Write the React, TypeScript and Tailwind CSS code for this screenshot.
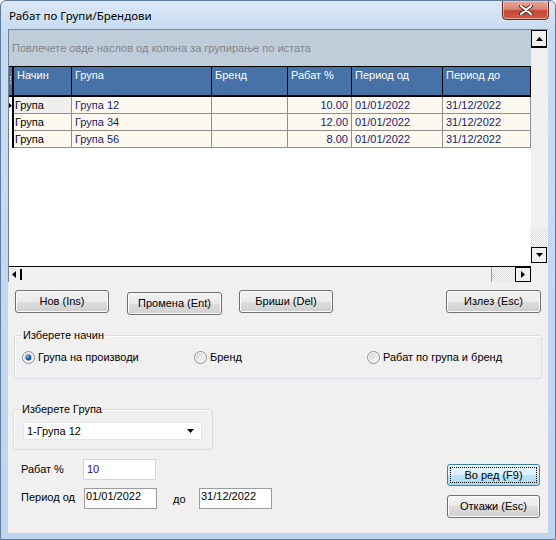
import React from "react";

const FONT = "font-['Liberation_Sans',Arial,sans-serif]";

function Radio({ checked }: { checked?: boolean }) {
  return (
    <svg width="13" height="13" viewBox="0 0 13 13" className="shrink-0">
      <defs>
        <linearGradient id="rbIn" x1="0" y1="0" x2="1" y2="1">
          <stop offset="0" stopColor="#d2d2d2" />
          <stop offset="1" stopColor="#fbfbfb" />
        </linearGradient>
        <radialGradient id="rbDot" cx="0.4" cy="0.35" r="0.7">
          <stop offset="0" stopColor="#8fc8ee" />
          <stop offset="0.45" stopColor="#2a6fb5" />
          <stop offset="1" stopColor="#0f3a72" />
        </radialGradient>
      </defs>
      <circle cx="6.5" cy="6.5" r="6" fill="#f6f6f6" stroke="#8e8f8f" strokeWidth="1" />
      <circle cx="6.5" cy="6.5" r="4.6" fill="url(#rbIn)" />
      {checked && <circle cx="6.5" cy="6.5" r="2.9" fill="url(#rbDot)" />}
    </svg>
  );
}

function Btn({ children, className = "" }: { children: React.ReactNode; className?: string }) {
  return (
    <div
      className={`h-[23px] flex items-center justify-center rounded-[3px] border border-[#707070] bg-[linear-gradient(#f2f2f2_0%,#ebebeb_50%,#dddddd_50%,#cfcfcf_100%)] shadow-[inset_0_0_0_1px_#fbfbfb] text-[11px] text-black ${className}`}
    >
      {children}
    </div>
  );
}

function Tri({ dir }: { dir: "up" | "down" | "left" | "right" }) {
  const pts =
    dir === "up"
      ? "0,4 7,4 3.5,0"
      : dir === "down"
      ? "0,0 7,0 3.5,4"
      : dir === "left"
      ? "4,0 4,7 0,3.5"
      : "0,0 0,7 4,3.5";
  const w = dir === "up" || dir === "down" ? 7 : 4;
  const h = dir === "up" || dir === "down" ? 4 : 7;
  return (
    <svg width={w} height={h} viewBox={`0 0 ${w} ${h}`}>
      <polygon points={pts} fill="#000" />
    </svg>
  );
}

const cols = [
  { w: "w-[58px]", t: "Начин" },
  { w: "w-[140px]", t: "Група" },
  { w: "w-[76px]", t: "Бренд" },
  { w: "w-[64px]", t: "Рабат %" },
  { w: "w-[91px]", t: "Период од" },
  { w: "w-[88px]", t: "Период до" },
];

const rows = [
  ["Група", "Група 12", "", "10.00", "01/01/2022", "31/12/2022"],
  ["Група", "Група 34", "", "12.00", "01/01/2022", "31/12/2022"],
  ["Група", "Група 56", "", "8.00", "01/01/2022", "31/12/2022"],
];

function Grid() {
  return (
    <div className="flex h-[253px] w-[540px]">
      <div className="flex flex-col w-[523px] h-full border-l border-[#6f8094] bg-white">
        <div className="h-[37px] bg-[#bfccd9] border-t border-[#7a8a9b] flex items-center pl-[3px] text-[11px] text-[#82878d]">
          Повлечете овде наслов од колона за групирање по истата
        </div>
        <div className="h-[31px] flex border-t border-b-2 border-black bg-[#4672a8] text-white text-[11px]">
          <div className="w-[5px] h-full border-r-2 border-black flex flex-col items-center pt-[9px]">
            <div className="w-[1px] h-[8px] border-l border-dotted border-[#d8e2ee]"></div>
          </div>
          {cols.map((c, i) => (
            <div key={i} className={`${c.w} h-full border-r border-black pl-[3px] pt-[2px] leading-[13px]`}>
              {c.t}
            </div>
          ))}
        </div>
        {rows.map((r, ri) => (
          <div key={ri} className="h-[17px] flex text-[11px] bg-[#fdf9ef]">
            <div className="w-[5px] h-full border-r-2 border-black bg-white flex items-center">
              {ri === 0 && <Tri dir="right" />}
            </div>
            {r.map((v, ci) => (
              <div
                key={ci}
                className={`${cols[ci].w} h-full border-r border-b border-[#8e8e8e] flex items-center leading-[13px] ${
                  ci === 0 ? "pl-[1px] text-black" : "pl-[3px] text-[#1b1b72]"
                } ${ci === 3 ? "justify-end pr-[3px]" : ""} ${ri === 0 && ci === 0 ? "bg-[#efefef]" : ""}`}
              >
                {v}
              </div>
            ))}
          </div>
        ))}
        <div className="flex-1 bg-white"></div>
        <div className="h-[16px] flex border-t border-black bg-[#f0f0f0]">
          <div className="w-[10px] flex items-center justify-center">
            <Tri dir="left" />
          </div>
          <div className="w-[473px] flex items-center border-r border-[#9a9a9a]">
            <div className="w-[2px] h-[11px] bg-black ml-[1px]"></div>
          </div>
          <div className="w-[23px] bg-[repeating-conic-gradient(#d8d8d8_0%_25%,#ffffff_0%_50%)] bg-size-[2px_2px]"></div>
          <div className="w-[16px] border border-black flex items-center justify-center">
            <Tri dir="right" />
          </div>
        </div>
      </div>
      <div className="w-[17px] h-full flex flex-col bg-[#f0f0f0]">
        <div className="h-[237px] flex flex-col border-t border-[#7a8a9b]">
          <div className="h-[18px] w-[16px] border border-b-2 border-black flex items-center justify-center">
            <Tri dir="up" />
          </div>
          <div className="flex-1"></div>
          <div className="h-[18px] w-[16px] bg-[repeating-conic-gradient(#d8d8d8_0%_25%,#ffffff_0%_50%)] bg-size-[2px_2px]"></div>
          <div className="h-[16px] w-[16px] border border-black flex items-center justify-center">
            <Tri dir="down" />
          </div>
          <div className="h-[3px]"></div>
        </div>
        <div className="flex-1"></div>
      </div>
    </div>
  );
}

export default function App() {
  return (
    <div className={`${FONT} w-[556px] h-[540px] flex flex-col rounded-t-[6px] border border-[#5f7c9e] bg-[linear-gradient(180deg,#dbe8f6_0px,#c8dcf1_28px,#bfd5ed_100%)] overflow-hidden`}>
      <div className="h-[28px] flex items-start justify-between">
        <div className="pl-[8px] pt-[7px] text-[11.5px] leading-[16px] text-black font-['Noto_Sans',sans-serif]">
          Рабат по Групи/Брендови
        </div>
        <div className="mt-[-1px] mr-[6px] w-[47px] h-[20px] rounded-b-[4px] border border-[#6b2a22] bg-[linear-gradient(#e6a99c_0%,#d98576_45%,#c4452f_55%,#cf5f48_100%)] shadow-[inset_0_0_0_1px_rgba(255,220,210,0.55)] flex items-center justify-center">
          <svg width="14" height="10" viewBox="0 0 14 10">
            <path d="M2 1 L12 9 M12 1 L2 9" stroke="#4a2a2a" strokeWidth="4" strokeLinecap="round" />
            <path d="M2 1 L12 9 M12 1 L2 9" stroke="#ffffff" strokeWidth="2.2" strokeLinecap="round" />
          </svg>
        </div>
      </div>
      <div className="mx-[7px] w-[540px] h-[504px] bg-[#f0f0f0] flex flex-col text-[11px] text-black">
        <Grid />
        <div className="mt-[8px] h-[25px] flex items-start">
          <Btn className="ml-[7px] w-[94px]">Нов (Ins)</Btn>
          <Btn className="ml-[18px] mt-[2px] w-[95px]">Промена (Ent)</Btn>
          <Btn className="ml-[17px] w-[94px]">Бриши (Del)</Btn>
          <Btn className="ml-[113px] w-[95px]">Излез (Esc)</Btn>
        </div>
        <fieldset className="mt-[14px] ml-[6px] w-[528px] h-[50px] border border-[#d5dfe5] rounded-[3px] shadow-[inset_1px_1px_0_#ffffff]">
          <legend className="ml-[7px] px-[1px] leading-[13px]">Изберете начин</legend>
          <div className="mt-[9px] flex items-center h-[13px]">
            <div className="ml-[7px] w-[172px] flex items-center gap-[3px]">
              <Radio checked />
              <span>Група на производи</span>
            </div>
            <div className="w-[173px] flex items-center gap-[3px]">
              <Radio />
              <span>Бренд</span>
            </div>
            <div className="flex items-center gap-[3px]">
              <Radio />
              <span>Рабат по група и бренд</span>
            </div>
          </div>
        </fieldset>
        <div className="mt-[24px] flex">
          <div className="ml-[5px] w-[280px] flex flex-col">
            <fieldset className="w-[200px] h-[47px] border border-[#d5dfe5] rounded-[3px] shadow-[inset_1px_1px_0_#ffffff]">
              <legend className="ml-[7px] px-[1px] leading-[13px]">Изберете Група</legend>
              <div className="mt-[6px] ml-[9px] w-[179px] h-[18px] bg-white border border-[#e2e6ea] flex items-center justify-between pl-[3px] pr-[7px]">
                <span>1-Група 12</span>
                <Tri dir="down" />
              </div>
            </fieldset>
            <div className="mt-[9px] flex items-center h-[21px]">
              <div className="ml-[8px] w-[62px]">Рабат %</div>
              <div className="w-[73px] h-[21px] bg-white border border-[#d6d6d6] flex items-center pl-[3px] text-[#3b0a55]">10</div>
            </div>
            <div className="mt-[8px] flex items-start h-[21px]">
              <div className="ml-[8px] w-[63px] pt-[1px]">Период од</div>
              <div className="w-[73px] h-[21px] bg-white border border-[#9c9c9c] pl-[1px] pt-[1px] leading-[13px]">01/01/2022</div>
              <div className="ml-[16px] w-[26px] pt-[3px]">до</div>
              <div className="w-[73px] h-[21px] bg-white border border-[#9c9c9c] pl-[1px] pt-[1px] leading-[13px]">31/12/2022</div>
            </div>
          </div>
          <div className="ml-[154px] mt-[61px] flex flex-col">
            <div className="w-[93px] h-[22px] rounded-[3px] border border-[#3c7fb1] bg-[linear-gradient(#eaf6fd_0%,#d9f0fc_50%,#bee6fd_50%,#a7d9f5_100%)] p-[2px]">
              <div className="w-full h-full border border-dotted border-black flex items-center justify-center">Во ред (F9)</div>
            </div>
            <Btn className="mt-[9px] w-[93px]">Откажи (Esc)</Btn>
          </div>
        </div>
      </div>
    </div>
  );
}
